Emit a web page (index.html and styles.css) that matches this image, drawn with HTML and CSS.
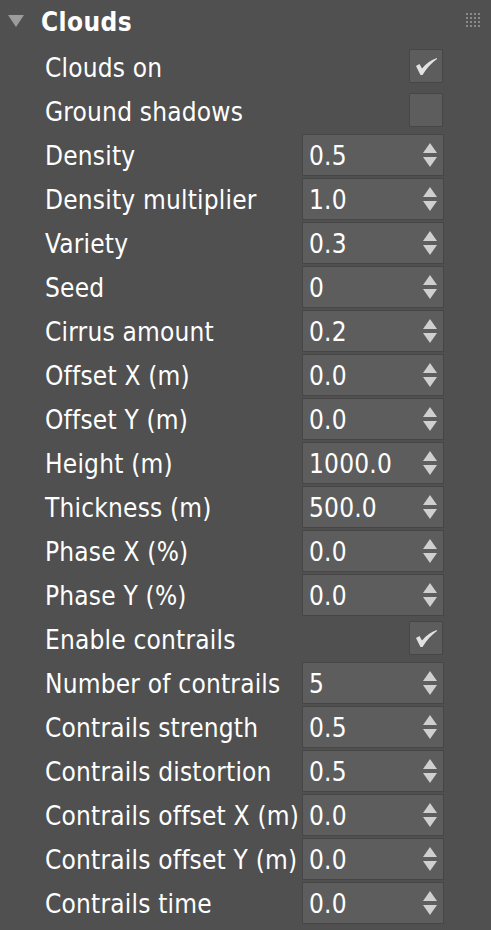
FILE: index.html
```html
<!DOCTYPE html>
<html>
<head>
<meta charset="utf-8">
<link rel="stylesheet" href="styles.css">
</head>
<body>
<div class="panel">
  <div class="header">
    <span class="caret"></span>
    <span class="title">Clouds</span>
    <svg class="grip" width="14" height="14" viewBox="0 0 14 14">
      <g fill="#8a8a8a">
        <rect x="0" y="0" width="2" height="2"/><rect x="4" y="0" width="2" height="2"/><rect x="8" y="0" width="2" height="2"/><rect x="12" y="0" width="2" height="2"/>
        <rect x="0" y="4" width="2" height="2"/><rect x="4" y="4" width="2" height="2"/><rect x="8" y="4" width="2" height="2"/><rect x="12" y="4" width="2" height="2"/>
        <rect x="0" y="8" width="2" height="2"/><rect x="4" y="8" width="2" height="2"/><rect x="8" y="8" width="2" height="2"/><rect x="12" y="8" width="2" height="2"/>
        <rect x="0" y="12" width="2" height="2"/><rect x="4" y="12" width="2" height="2"/><rect x="8" y="12" width="2" height="2"/><rect x="12" y="12" width="2" height="2"/>
      </g>
    </svg>
  </div>
  <div class="rows">
    <div class="row"><span class="label">Clouds on</span><span class="check"><svg width="21" height="17" viewBox="0 0 21 17"><path d="M0 8 L3.5 6 L6 10.5 Q12 3 21 0 L21 1 Q12.5 7 6.5 17 L4.5 17 Z" fill="#e2e2e2"/></svg></span></div>
    <div class="row"><span class="label">Ground shadows</span><span class="check"></span></div>
    <div class="row"><span class="label">Density</span><span class="spin"><span class="val">0.5</span><span class="arrows"><i class="up"></i><i class="down"></i></span></span></div>
    <div class="row"><span class="label">Density multiplier</span><span class="spin"><span class="val">1.0</span><span class="arrows"><i class="up"></i><i class="down"></i></span></span></div>
    <div class="row"><span class="label">Variety</span><span class="spin"><span class="val">0.3</span><span class="arrows"><i class="up"></i><i class="down"></i></span></span></div>
    <div class="row"><span class="label">Seed</span><span class="spin"><span class="val">0</span><span class="arrows"><i class="up"></i><i class="down"></i></span></span></div>
    <div class="row"><span class="label">Cirrus amount</span><span class="spin"><span class="val">0.2</span><span class="arrows"><i class="up"></i><i class="down"></i></span></span></div>
    <div class="row"><span class="label">Offset X (m)</span><span class="spin"><span class="val">0.0</span><span class="arrows"><i class="up"></i><i class="down"></i></span></span></div>
    <div class="row"><span class="label">Offset Y (m)</span><span class="spin"><span class="val">0.0</span><span class="arrows"><i class="up"></i><i class="down"></i></span></span></div>
    <div class="row"><span class="label">Height (m)</span><span class="spin"><span class="val">1000.0</span><span class="arrows"><i class="up"></i><i class="down"></i></span></span></div>
    <div class="row"><span class="label">Thickness (m)</span><span class="spin"><span class="val">500.0</span><span class="arrows"><i class="up"></i><i class="down"></i></span></span></div>
    <div class="row"><span class="label">Phase X (%)</span><span class="spin"><span class="val">0.0</span><span class="arrows"><i class="up"></i><i class="down"></i></span></span></div>
    <div class="row"><span class="label">Phase Y (%)</span><span class="spin"><span class="val">0.0</span><span class="arrows"><i class="up"></i><i class="down"></i></span></span></div>
    <div class="row"><span class="label">Enable contrails</span><span class="check"><svg width="21" height="17" viewBox="0 0 21 17"><path d="M0 8 L3.5 6 L6 10.5 Q12 3 21 0 L21 1 Q12.5 7 6.5 17 L4.5 17 Z" fill="#e2e2e2"/></svg></span></div>
    <div class="row"><span class="label">Number of contrails</span><span class="spin"><span class="val">5</span><span class="arrows"><i class="up"></i><i class="down"></i></span></span></div>
    <div class="row"><span class="label">Contrails strength</span><span class="spin"><span class="val">0.5</span><span class="arrows"><i class="up"></i><i class="down"></i></span></span></div>
    <div class="row"><span class="label">Contrails distortion</span><span class="spin"><span class="val">0.5</span><span class="arrows"><i class="up"></i><i class="down"></i></span></span></div>
    <div class="row"><span class="label">Contrails offset X (m)</span><span class="spin"><span class="val">0.0</span><span class="arrows"><i class="up"></i><i class="down"></i></span></span></div>
    <div class="row"><span class="label">Contrails offset Y (m)</span><span class="spin"><span class="val">0.0</span><span class="arrows"><i class="up"></i><i class="down"></i></span></span></div>
    <div class="row"><span class="label">Contrails time</span><span class="spin"><span class="val">0.0</span><span class="arrows"><i class="up"></i><i class="down"></i></span></span></div>
  </div>
</div>
</body>
</html>
```
FILE: styles.css
```css
html, body {
  margin: 0;
  padding: 0;
  background: #505050;
}
.panel {
  width: 491px;
  height: 930px;
  background: #505050;
  font-family: "DejaVu Sans Condensed", "DejaVu Sans", sans-serif;
  color: #ffffff;
  overflow: hidden;
}
.header {
  height: 45px;
  display: flex;
  align-items: center;
  padding-left: 8px;
  padding-right: 11px;
  box-sizing: border-box;
}
.caret {
  width: 0;
  height: 0;
  border-left: 8.5px solid transparent;
  border-right: 8.5px solid transparent;
  border-top: 12px solid #9c9c9c;
  margin-top: -4px;
}
.title {
  font-weight: bold;
  font-size: 26px;
  letter-spacing: 0.4px;
  margin-left: 17px;
  margin-top: -2px;
  flex: 1;
}
.grip {
  margin-top: -6px;
}
.rows {
  display: flex;
  flex-direction: column;
}
.row {
  height: 44px;
  display: flex;
  align-items: center;
  padding-left: 45px;
  padding-right: 47px;
}
.label {
  flex: 1;
  font-size: 26px;
  letter-spacing: 0.2px;
  white-space: nowrap;
  padding-top: 2px;
}
.check {
  width: 34px;
  height: 34px;
  box-sizing: border-box;
  background: #5d5d5d;
  border: 1px solid #464646;
  margin-right: 1px;
  margin-top: -2px;
  display: flex;
  align-items: center;
  justify-content: center;
}
.spin {
  box-sizing: border-box;
  width: 142px;
  height: 42px;
  background: #5d5d5d;
  border: 1px solid #464646;
  display: flex;
  align-items: center;
  padding-left: 6px;
  padding-right: 6px;
}
.val {
  flex: 1;
  font-size: 26px;
  letter-spacing: 0.2px;
  padding-top: 2px;
}
.arrows {
  display: flex;
  flex-direction: column;
  gap: 4px;
  align-items: center;
}
.arrows i {
  display: block;
  width: 0;
  height: 0;
  border-left: 7px solid transparent;
  border-right: 7px solid transparent;
}
.arrows .up {
  border-bottom: 10px solid #cfcfcf;
}
.arrows .down {
  border-top: 10px solid #cfcfcf;
}
```
